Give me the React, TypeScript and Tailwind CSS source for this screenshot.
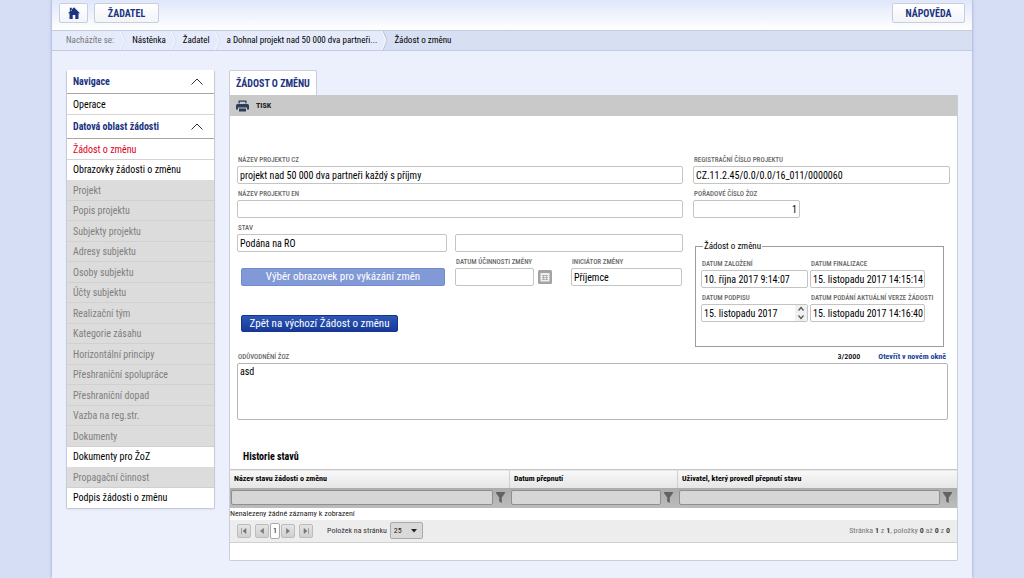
import { useId } from "react";
import type { ReactNode } from "react";

interface FieldProps {
  label: string;
  value?: string;
  className?: string;
  inputClass?: string;
  children?: ReactNode;
}

interface MenuItem {
  title: string;
  state?: "active" | "disabled";
}

const crumbs = ["Nástěnka", "Žadatel", "a Dohnal projekt nad 50 000 dva partneři..."];

const menu: MenuItem[] = [
  { title: "Žádost o změnu", state: "active" },
  { title: "Obrazovky žádosti o změnu" },
  { title: "Projekt", state: "disabled" },
  { title: "Popis projektu", state: "disabled" },
  { title: "Subjekty projektu", state: "disabled" },
  { title: "Adresy subjektu", state: "disabled" },
  { title: "Osoby subjektu", state: "disabled" },
  { title: "Účty subjektu", state: "disabled" },
  { title: "Realizační tým", state: "disabled" },
  { title: "Kategorie zásahu", state: "disabled" },
  { title: "Horizontální principy", state: "disabled" },
  { title: "Přeshraniční spolupráce", state: "disabled" },
  { title: "Přeshraniční dopad", state: "disabled" },
  { title: "Vazba na reg.str.", state: "disabled" },
  { title: "Dokumenty", state: "disabled" },
  { title: "Dokumenty pro ŽoZ" },
  { title: "Propagační činnost", state: "disabled" },
  { title: "Podpis žádosti o změnu" },
];

const columns = [
  { title: "Název stavu žádosti o změnu", width: "" },
  { title: "Datum přepnutí", width: "w-[168px]" },
  { title: "Uživatel, který provedl přepnutí stavu", width: "" },
];

const inputBase =
  "h-[18px] min-w-0 rounded-xs border border-[#c4c4c4] bg-white pl-0.5 text-[10px] leading-4 text-black outline-none";
const labelBase = "block whitespace-nowrap pl-px text-[7px] leading-3 font-medium uppercase text-[#666]";
const headerButton =
  "flex h-5 items-center justify-center rounded-xs border border-[#c9cedb] bg-linear-to-b from-white to-[#f3f4f8] text-[10px] font-bold text-[#1b3380]";

function Field({ label, value = "", className = "", inputClass = "w-full", children }: FieldProps) {
  const id = useId();
  return (
    <div className={className}>
      <label htmlFor={id} className={labelBase}>{label}</label>
      <div className="relative flex items-center">
        <input id={id} type="text" defaultValue={value} className={`${inputBase} ${inputClass}`} />
        {children}
      </div>
    </div>
  );
}

function CrumbArrow({ last = false }: { last?: boolean }) {
  return (
    <svg viewBox="0 0 6 20" preserveAspectRatio="none" className="h-full w-1.5 shrink-0" fill="none">
      {last && <path d="M0 0h1l4 10-4 10H0z" fill="#e6ecfb" />}
      <path d="M1 0l4 10-4 10" stroke={last ? "#b4bcd0" : "#d3dcf4"} />
      <path d="M0 0l4 10-4 10" stroke="#f5f8ff" />
    </svg>
  );
}

function MenuHead({ title }: { title: string }) {
  return (
    <button className="flex h-6 w-full items-center justify-between border-b border-[#a8a8a8] bg-white pr-2.5 pl-1.5 text-[10px] font-bold text-[#1b3380]">
      {title}
      <svg viewBox="0 0 14 8" className="h-2 w-3.5" fill="none" stroke="#333">
        <path d="M1.500 6.500L7 1l5.500 5.500" />
      </svg>
    </button>
  );
}

function Sidebar() {
  return (
    <nav className="w-[149px] shrink-0 rounded-xs border-x border-b border-[#c6cbd8] bg-white shadow-xs">
      <MenuHead title="Navigace" />
      <a href="#operace" className="flex h-[21px] items-center border-b border-[#d5d5d5] px-1.5 text-[10px] text-black">
        Operace
      </a>
      <MenuHead title="Datová oblast žádosti" />
      <ul>
        {menu.map((item) => (
          <li key={item.title} className="h-5 odd:h-[21px]">
            <a
              href="#"
              className={`flex h-full items-center border-b px-1.5 text-[10px] whitespace-nowrap ${
                item.state === "disabled"
                  ? "border-[#d0d0d0] bg-[#dcdcdc] text-[#808080]"
                  : item.state === "active"
                    ? "border-[#d5d5d5] text-[#dc0020]"
                    : "border-transparent text-black"
              }`}
            >
              {item.title}
            </a>
          </li>
        ))}
      </ul>
    </nav>
  );
}

function ChangeRequest() {
  return (
    <fieldset className="mt-[22px] mr-1.5 ml-0.5 min-w-0 border border-[#9c9c9c] px-[5px] pb-6">
      <legend className="ml-0.5 px-px text-[9px] leading-3 text-black">Žádost o změnu</legend>
      <div className="grid grid-cols-[107px_minmax(0,1fr)] gap-x-0.5 gap-y-1 pt-1.5">
        <Field label="Datum založení" value="10. října 2017 9:14:07" />
        <Field label="Datum finalizace" value="15. listopadu 2017 14:15:14" inputClass="w-[115px]" />
        <Field label="Datum podpisu" value="15. listopadu 2017">
          <div className="absolute inset-y-px right-px flex w-3 flex-col bg-[#f0f0f0]">
            <button type="button" aria-label="Zvýšit" className="flex h-2 items-center justify-center">
              <svg viewBox="0 0 8 6" className="h-1.5 w-2" fill="none" stroke="#555" strokeWidth="1.2"><path d="M1.5 4.5L4 1.5l2.5 3" /></svg>
            </button>
            <button type="button" aria-label="Snížit" className="flex h-2 items-center justify-center">
              <svg viewBox="0 0 8 6" className="h-1.5 w-2" fill="none" stroke="#555" strokeWidth="1.2"><path d="M1.5 1.5L4 4.5l2.5-3" /></svg>
            </button>
          </div>
        </Field>
        <Field label="Datum podání aktuální verze žádosti" value="15. listopadu 2017 14:16:40" inputClass="w-[115px]" />
      </div>
    </fieldset>
  );
}

function RequestForm() {
  return (
    <form className="px-[7px] pt-[38px]">
      <div className="flex gap-2.5">
        <div className="flex min-w-0 flex-1 flex-col gap-1">
          <Field label="Název projektu CZ" value="projekt nad 50 000 dva partneři každý s příjmy" />
          <Field label="Název projektu EN" />
          <div className="flex items-end gap-2">
            <Field label="Stav" value="Podána na ŘO" className="w-[210px]" />
            <input type="text" aria-label="Doplnění stavu" className={`${inputBase} flex-1`} />
          </div>
          <div className="flex items-end gap-2">
            <div className="w-[210px] pr-0.5 pl-1">
              <button type="button" className="block h-[18px] w-full rounded-xs border border-[#728bd0] bg-[#8299d8] text-[11px] leading-4 text-white">
                Výběr obrazovek pro vykázání změn
              </button>
            </div>
            <Field label="Datum účinnosti změny" className="w-[108px]" inputClass="w-[79px]">
              <button type="button" aria-label="Vybrat datum" className="ml-1">
                <svg viewBox="0 0 14 14" className="size-3.5" fill="none">
                  <rect width="14" height="14" rx="1.5" fill="#a3a3a3" />
                  <path d="M2.500 3h9v8.500h-9z" fill="#eee" />
                  <path d="M4 5.500h6M4 7.500h6M4 9.500h6M5.500 5v5M8.500 5v5" stroke="#a8a8a8" strokeWidth=".8" />
                </svg>
              </button>
            </Field>
            <Field label="Iniciátor změny" value="Příjemce" className="w-[111px]" />
          </div>
          <div className="pt-[25px] pl-1">
            <button type="button" className="block h-[17px] w-[157px] rounded-xs border border-[#17348c] bg-linear-to-b from-[#2c56b8] to-[#173a98] text-[11px] leading-[15px] text-white">
              Zpět na výchozí Žádost o změnu
            </button>
          </div>
        </div>
        <div className="w-[257px] shrink-0">
          <div className="flex flex-col gap-1">
            <Field label="Registrační číslo projektu" value="CZ.11.2.45/0.0/0.0/16_011/0000060" />
            <Field label="Pořadové číslo ŽoZ" value="1" inputClass="w-[107px] pr-0.5 text-right" />
          </div>
          <ChangeRequest />
        </div>
      </div>
      <div className="mt-1 mr-0.5">
        <div className="flex items-center text-[8px] leading-3">
          <label htmlFor="reason" className={labelBase}>Odůvodnění ŽoZ</label>
          <span className="ml-auto font-medium text-black">3/2000</span>
          <a href="#reason" className="mr-0.5 ml-[18px] font-bold text-[#1b3f96]">Otevřít v novém okně</a>
        </div>
        <textarea
          id="reason"
          defaultValue="asd"
          className="block h-[57px] w-full resize-none rounded-xs border border-[#b5b5b5] bg-white px-0.5 py-px text-[10px] leading-[14px] text-black outline-none"
        />
      </div>
    </form>
  );
}

function PagerButton({ label, path }: { label: string; path: string }) {
  return (
    <button aria-label={label} className="flex size-3.5 items-center justify-center rounded-xs border border-[#bcbcbc] bg-linear-to-b from-[#e4e4e4] to-[#d0d0d0]">
      <svg viewBox="0 0 8 8" className="size-2" fill="#777" stroke="#777" strokeWidth=".6">
        <path d={path} />
      </svg>
    </button>
  );
}

function History() {
  return (
    <section className="pt-[29px]">
      <h2 className="px-[13px] pb-1 text-[10px] leading-4 font-bold text-black">Historie stavů</h2>
      <table className="w-full table-fixed border-collapse">
        <thead>
          <tr className="h-[18px] border-t border-[#c8c8c8] bg-linear-to-b from-[#f8f8f8] to-[#e6e6e6]">
            {columns.map((col) => (
              <th key={col.title} className={`${col.width} border-r border-[#d0d0d0] px-1 text-left text-[8px] leading-3 font-bold text-black last:border-r-0`}>
                {col.title}
              </th>
            ))}
          </tr>
          <tr className="h-5 bg-linear-to-b from-[#acacac] to-[#bcbcbc]">
            {columns.map((col) => (
              <td key={col.title} className="pr-0.5 pl-px">
                <div className="flex items-center">
                  <input type="text" aria-label={col.title} className="h-[15px] min-w-0 flex-1 rounded-xs border border-[#8f8f8f] bg-[#d6d6d6] px-0.5 text-[9px] outline-none" />
                  <button aria-label={`Filtrovat ${col.title}`} className="flex w-[15px] justify-center">
                    <svg viewBox="0 0 9 11" className="h-[11px] w-[9px]" fill="#626262">
                      <path d="M0 0h9v1L5.800 5.500V11L3.200 9.500v-4L0 1z" />
                    </svg>
                  </button>
                </div>
              </td>
            ))}
          </tr>
        </thead>
        <tbody>
          <tr>
            <td colSpan={3} className="h-3 text-[8px] leading-3 text-[#222]">Nenalezeny žádné záznamy k zobrazení</td>
          </tr>
        </tbody>
      </table>
      <div className="flex h-[23px] items-center border-b border-[#cfcfcf] bg-[#ededed] px-[7px] text-[8px] text-[#333]">
        <PagerButton label="První" path="M1.500 1v6M6 1.500L3 4l3 2.500z" />
        <div className="mx-1 flex items-center gap-px">
          <PagerButton label="Předchozí" path="M5.500 1.500L2.500 4l3 2.500z" />
          <button aria-current="page" className="h-4 w-2.5 rounded-xs border border-[#aaa] bg-white text-[8px] text-black">1</button>
          <PagerButton label="Další" path="M2.500 1.500L5.500 4l-3 2.500z" />
        </div>
        <PagerButton label="Poslední" path="M6.500 1v6M2 1.500L5 4 2 6.500z" />
        <label htmlFor="page-size" className="mr-[3px] ml-3.5">Položek na stránku</label>
        <div className="relative">
          <select id="page-size" defaultValue="25" className="block h-[17px] w-[33px] appearance-none rounded-xs border border-[#aaa] bg-[#d9d9d9] pl-[3px] text-[8px] text-[#222] outline-none">
            <option>25</option>
          </select>
          <svg viewBox="0 0 6 4" className="pointer-events-none absolute top-[7px] right-1.5 h-1 w-1.5" fill="#222"><path d="M0 0h6L3 3.500z" /></svg>
        </div>
        <p className="ml-auto text-[#777]">
          Stránka <b className="text-[#444]">1</b> z <b className="text-[#444]">1</b>, položky <b className="text-[#444]">0</b> až <b className="text-[#444]">0</b> z <b className="text-[#444]">0</b>
        </p>
      </div>
    </section>
  );
}

function App() {
  return (
    <div className="min-h-screen bg-[#d6def6] font-['Roboto_Condensed','Liberation_Sans_Narrow',Roboto,sans-serif]">
      <div className="mx-auto min-h-screen max-w-[920px] bg-[#ecf0fc] shadow-[0_0_3px_#8f9dc4]">
        <header className="flex items-center justify-between bg-linear-to-b from-[#e0e7fb] to-white px-[7px] pt-[3px] pb-[7px]">
          <div className="flex gap-1.5">
            <button aria-label="Domů" className={`${headerButton} w-[29px]`}>
              <svg viewBox="0 0 14 12" className="h-3 w-3.5" fill="currentColor">
                <path d="M7 .3L1 6.200h1.500V12h3.200V8h2.600v4h3.200V6.200H13zM2.800 .8h2v3h-2z" />
              </svg>
            </button>
            <button className={`${headerButton} w-[65px]`}>ŽADATEL</button>
          </div>
          <button className={`${headerButton} w-[73px]`}>NÁPOVĚDA</button>
        </header>
        <nav className="flex h-[21px] border-y border-[#c3cbe0] bg-[#d7dff3] text-[9px] text-black">
          <ol className="flex items-center bg-[#e5ebfb] pl-3.5">
            <li className="flex h-full items-center text-[#777]">
              <span className="pr-1.5">Nacházíte se:</span>
              <CrumbArrow />
            </li>
            {crumbs.map((crumb, i) => (
              <li key={crumb} className="flex h-full items-center">
                <a href="#" className="pr-[5px] pl-1.5">{crumb}</a>
                {i < crumbs.length - 1 && <CrumbArrow />}
              </li>
            ))}
          </ol>
          <CrumbArrow last />
          <span aria-current="page" className="flex items-center px-1.5">Žádost o změnu</span>
        </nav>
        <div className="flex items-start gap-3.5 px-3.5 pt-[19px] pb-[17px]">
          <Sidebar />
          <main className="min-w-0 flex-1">
            <div className="flex">
              <button className="h-[25px] rounded-t-xs border-x border-t border-[#c9cedb] bg-white px-1.5 text-[10px] font-bold text-[#1b3380]">
                ŽÁDOST O ZMĚNU
              </button>
            </div>
            <div className="rounded-b-xs border-x border-b border-[#c9cedb] bg-white pb-[17px]">
              <div className="flex h-[21px] items-center bg-[#c9c9c9] px-1.5">
                <button className="flex items-center gap-[7px] text-[8px] font-bold text-[#222]">
                  <svg viewBox="0 0 13 12" className="h-3 w-[13px]" fill="#2c3e57">
                    <path d="M2.500 .5h8v3H9.300V1.700H3.700v1.800H2.500zM1.500 4h10Q13 4 13 5.500V9.500h-2V7.500H2v2H0V5.500Q0 4 1.500 4zM3 8.500h7v3H3z" />
                  </svg>
                  TISK
                </button>
              </div>
              <RequestForm />
              <History />
            </div>
          </main>
        </div>
      </div>
    </div>
  );
}

export default App;
